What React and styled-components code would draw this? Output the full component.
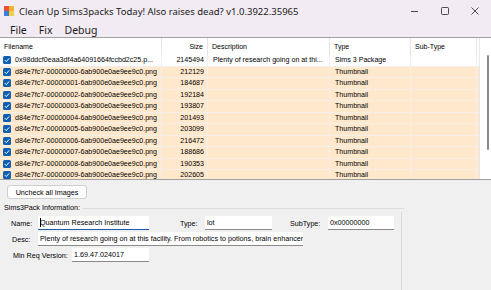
import React from "react";
import styled, { createGlobalStyle } from "styled-components";

const GlobalStyle = createGlobalStyle`
  html, body { margin: 0; padding: 0; background: #f0f0f0; }
  body { font-family: "Liberation Sans", Arial, sans-serif; }
  * { box-sizing: border-box; }
`;

const Window = styled.div`
  width: 491px;
  height: 290px;
  display: flex;
  flex-direction: column;
  overflow: hidden;
  background: #f0f0f0;
`;

const TitleBar = styled.div`
  height: 22px;
  display: flex;
  align-items: center;
  background: #f3ebf4;
  padding-left: 4px;
`;

const TitleText = styled.div`
  font-family: "Noto Sans", "Open Sans", sans-serif;
  font-size: 9.5px;
  color: #1a1a1a;
  margin-left: 5px;
  flex: 1;
  white-space: nowrap;
`;

const WinButtons = styled.div`
  display: flex;
  align-items: center;
  height: 100%;
  padding-right: 1px;
`;

const WinBtn = styled.div`
  width: 30px;
  height: 100%;
  display: flex;
  align-items: center;
  justify-content: center;
`;

const MenuBar = styled.div`
  height: 15px;
  display: flex;
  align-items: center;
  background: #f3ebf4;
  padding-left: 4px;
`;

const MenuItem = styled.div`
  font-family: "Noto Sans", "Open Sans", sans-serif;
  font-size: 10.5px;
  color: #1a1a1a;
  padding: 0 6px;
`;

const ListView = styled.div`
  height: 143px;
  display: flex;
  background: #fff;
  border-top: 1px solid #a0a0a0;
  border-bottom: 1px solid #a0a0a0;
  overflow: hidden;
`;

const Table = styled.div`
  width: 479px;
  display: flex;
  flex-direction: column;
`;

const COLS = "162px 46px 122px 81px 66px 2px";

const Header = styled.div`
  display: grid;
  grid-template-columns: ${COLS};
  height: 17px;
  flex-shrink: 0;
  background: #fff;
`;

const HeadCell = styled.div`
  font-size: 7px;
  color: #000;
  display: flex;
  align-items: center;
  justify-content: ${(p) => (p.$right ? "flex-end" : "flex-start")};
  padding: 0 4px 0 4px;
  border-right: 1px solid #e5e5e5;
`;

const Row = styled.div`
  display: grid;
  grid-template-columns: ${COLS};
  height: 11.5px;
  flex-shrink: 0;
  background: ${(p) => (p.$hl ? "#ffe8cc" : "#fff")};
  border-bottom: 1px solid ${(p) => (p.$hl ? "#f5efe8" : "#f0f0f0")};
`;

const Cell = styled.div`
  font-size: 7.1px;
  line-height: 10px;
  color: #000;
  display: flex;
  align-items: center;
  justify-content: ${(p) => (p.$right ? "flex-end" : "flex-start")};
  padding: 0 3px 0 ${(p) => (p.$first ? 3 : 5)}px;
  border-right: 1px solid ${(p) => (p.$hl ? "#f5efe8" : "#f0f0f0")};
  white-space: nowrap;
  overflow: hidden;
`;

const Check = styled.span`
  width: 8px;
  height: 8px;
  border-radius: 1.5px;
  background: #0f5fb5;
  margin-right: 4px;
  display: inline-flex;
  align-items: center;
  justify-content: center;
  flex-shrink: 0;
`;

const ScrollBar = styled.div`
  flex: 1;
  border-left: 1px solid #e8e8e8;
  background: #fff;
  position: relative;
`;

const Thumb = styled.div`
  position: absolute;
  left: 7px;
  top: 17px;
  width: 2px;
  height: 95px;
  background: #8a8a8a;
  border-radius: 1px;
`;

const Bottom = styled.div`
  flex: 1;
  padding: 5px 0 0 2px;
  display: flex;
  flex-direction: column;
`;

const Button = styled.div`
  width: 80px;
  height: 14px;
  margin-left: 5px;
  border: 1px solid #d0d0d0;
  border-radius: 3px;
  background: #fdfdfd;
  font-size: 7.2px;
  display: flex;
  align-items: center;
  justify-content: center;
  color: #000;
`;

const GroupLabel = styled.div`
  font-size: 7.2px;
  color: #000;
  margin: 3px 0 0 2px;
  display: flex;
  align-items: center;
  width: 400px;
  height: 10px;
  &::after {
    content: "";
    flex: 1;
    height: 1px;
    background: #dcdcdc;
    margin-left: 3px;
    margin-top: 2px;
  }
`;

const GroupBody = styled.div`
  width: 400px;
  flex: 1;
  border-right: 1px solid #dcdcdc;
  display: flex;
  flex-direction: column;
  gap: 2px;
  padding-top: 4px;
`;

const FieldRow = styled.div`
  display: flex;
  align-items: center;
  height: 14px;
`;

const Label = styled.div`
  font-size: 7.2px;
  color: #000;
  width: ${(p) => p.$w}px;
  padding-left: ${(p) => p.$pl || 0}px;
  white-space: nowrap;
`;

const TextBox = styled.div`
  width: ${(p) => p.$w}px;
  height: 14px;
  background: #fff;
  border-bottom: 1px solid ${(p) => (p.$focus ? "#1f5ba8" : "#8a8a8a")};
  font-size: 7.2px;
  display: flex;
  align-items: center;
  padding-left: 2px;
  color: #000;
  white-space: nowrap;
  overflow: hidden;
  margin-right: ${(p) => p.$mr || 0}px;
`;

const Caret = styled.span`
  width: 1px;
  height: 9px;
  background: #000;
  margin-right: -1px;
`;

const CheckMark = () => (
  <svg width="6" height="6" viewBox="0 0 6 6">
    <path d="M0.8 3.1 L2.3 4.6 L5.2 1.4" fill="none" stroke="#fff" strokeWidth="1" />
  </svg>
);

const rows = [
  { name: "0x98ddcf0eaa3df4a64091664fccbd2c25.p...", size: "2145494", desc: "Plenty of research going on at thi...", type: "Sims 3 Package", hl: false },
  ...[
    "212129", "184687", "192184", "193807", "201493", "203099", "216472", "188686", "190353", "202605",
  ].map((s, i) => ({
    name: `d84e7fc7-0000000${i}-6ab900e0ae9ee9c0.png`,
    size: s,
    desc: "",
    type: "Thumbnail",
    hl: true,
  })),
];

const AppIcon = () => (
  <svg width="10" height="10" viewBox="0 0 10 10">
    <rect x="0" y="0" width="5" height="5" fill="#e8503a" />
    <rect x="5" y="0" width="5" height="5" fill="#f2b233" />
    <rect x="0" y="5" width="5" height="5" fill="#3a7ee0" />
    <rect x="5" y="5" width="5" height="5" fill="#f2d040" />
  </svg>
);

export default function App() {
  return (
    <Window>
      <GlobalStyle />
      <TitleBar>
        <AppIcon />
        <TitleText>Clean Up Sims3packs Today! Also raises dead? v1.0.3922.35965</TitleText>
        <WinButtons>
          <WinBtn>
            <svg width="10" height="10" viewBox="0 0 10 10"><path d="M1 5.5 H8" stroke="#222" strokeWidth="0.8" /></svg>
          </WinBtn>
          <WinBtn>
            <svg width="10" height="10" viewBox="0 0 10 10"><rect x="1.5" y="1.5" width="7" height="7" rx="1" fill="none" stroke="#222" strokeWidth="0.8" /></svg>
          </WinBtn>
          <WinBtn>
            <svg width="10" height="10" viewBox="0 0 10 10"><path d="M1.5 1.5 L8.5 8.5 M8.5 1.5 L1.5 8.5" stroke="#222" strokeWidth="0.8" /></svg>
          </WinBtn>
        </WinButtons>
      </TitleBar>
      <MenuBar>
        <MenuItem>File</MenuItem>
        <MenuItem>Fix</MenuItem>
        <MenuItem>Debug</MenuItem>
      </MenuBar>
      <ListView>
        <Table>
          <Header>
            <HeadCell>Filename</HeadCell>
            <HeadCell $right>Size</HeadCell>
            <HeadCell>Description</HeadCell>
            <HeadCell>Type</HeadCell>
            <HeadCell>Sub-Type</HeadCell>
            <HeadCell />
          </Header>
          {rows.map((r, i) => (
            <Row key={i} $hl={r.hl}>
              <Cell $first $hl={r.hl}>
                <Check><CheckMark /></Check>
                {r.name}
              </Cell>
              <Cell $right $hl={r.hl}>{r.size}</Cell>
              <Cell $hl={r.hl}>{r.desc}</Cell>
              <Cell $hl={r.hl}>{r.type}</Cell>
              <Cell $hl={r.hl} />
              <Cell $hl={r.hl} />
            </Row>
          ))}
        </Table>
        <ScrollBar>
          <Thumb />
        </ScrollBar>
      </ListView>
      <Bottom>
        <Button>Uncheck all Images</Button>
        <GroupLabel>Sims3Pack Information:</GroupLabel>
        <GroupBody>
          <FieldRow>
            <Label $w={36} $pl={9}>Name:</Label>
            <TextBox $w={111} $mr={31} $focus><Caret />Quantum Research Institute</TextBox>
            <Label $w={25}>Type:</Label>
            <TextBox $w={67} $mr={18}>lot</TextBox>
            <Label $w={38}>SubType:</Label>
            <TextBox $w={66}>0x00000000</TextBox>
          </FieldRow>
          <FieldRow>
            <Label $w={36} $pl={10}>Desc:</Label>
            <TextBox $w={265}>Plenty of research going on at this facility. From robotics to potions, brain enhancen</TextBox>
          </FieldRow>
          <FieldRow>
            <Label $w={70} $pl={11}>Min Req Version:</Label>
            <TextBox $w={77}>1.69.47.024017</TextBox>
          </FieldRow>
        </GroupBody>
      </Bottom>
    </Window>
  );
}
